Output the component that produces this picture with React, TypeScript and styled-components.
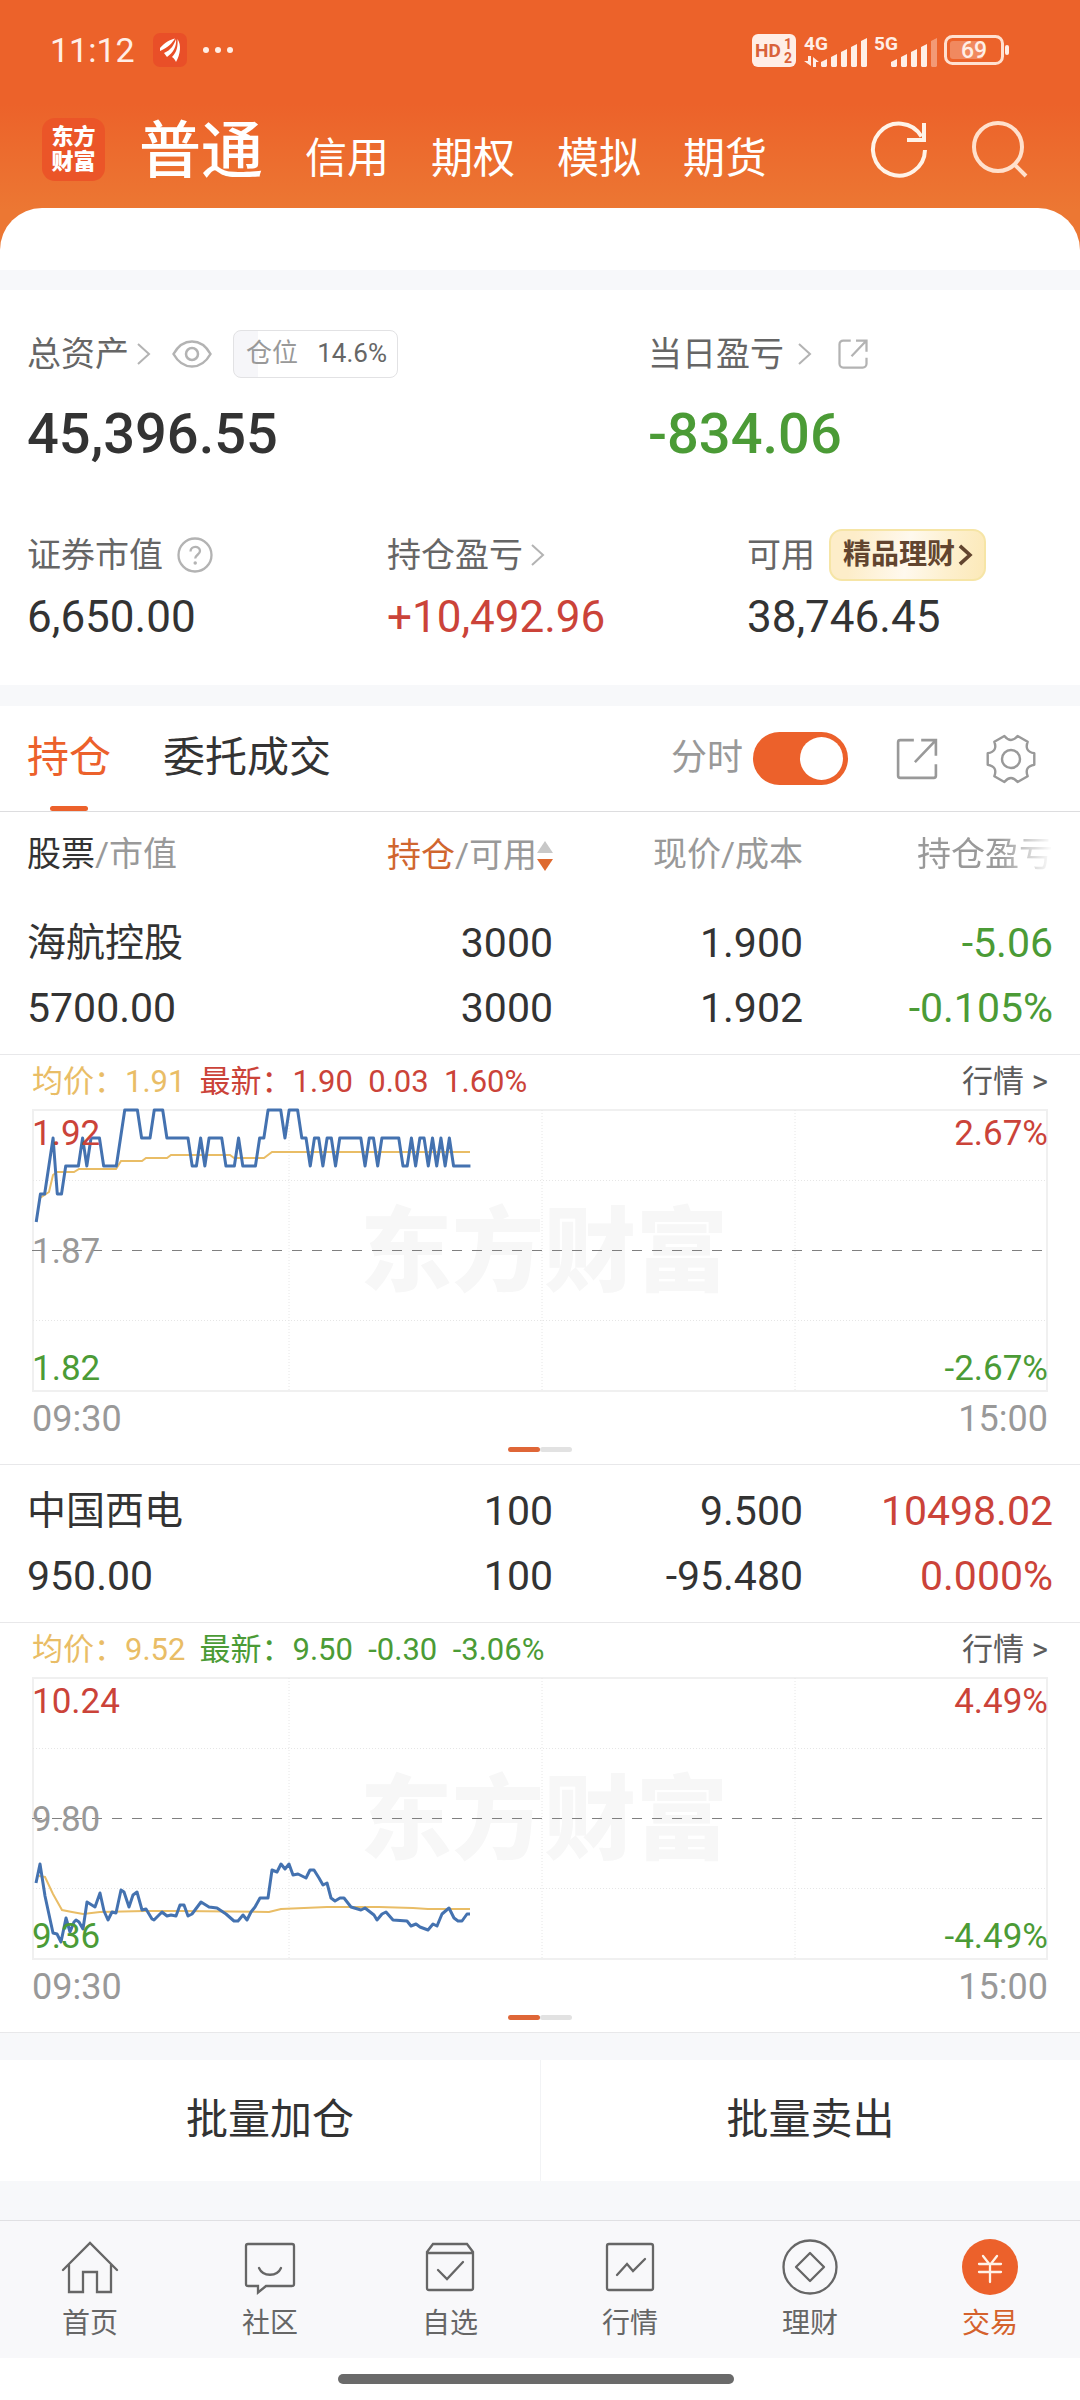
import React, { useState } from 'react';
import styled, { createGlobalStyle } from 'styled-components';

const color = {
  brand: '#ec612b',
  text: '#333333',
  sub: '#666666',
  mute: '#999999',
  line: '#e8e8ea',
  page: '#f7f8fa',
  up: '#cb4339',
  down: '#4b9b36',
  avg: '#e9bd66',
  price: '#4472b0',
};

const GlobalStyle = createGlobalStyle`
  * { box-sizing: border-box; }
  body {
    margin: 0;
    background: ${color.page};
    color: ${color.text};
    font-family: Roboto, "Noto Sans CJK SC", sans-serif;
    font-size: 34px;
    line-height: 1.2;
  }
  button {
    border: 0;
    padding: 0;
    background: none;
    color: inherit;
    font: inherit;
    cursor: pointer;
  }
  a { color: inherit; text-decoration: none; }
  svg { display: block; flex: none; overflow: visible; }
`;

type Tone = 'up' | 'down' | 'plain';
const toneColor = (t?: Tone) => (t === 'up' ? color.up : t === 'down' ? color.down : color.text);

/* ---------- header ---------- */

const Header = styled.header`
  padding-bottom: 52px;
  background: linear-gradient(#ec622a 104px, #ec7733 210px);
  color: #fff;
`;

const StatusBar = styled.div`
  display: flex;
  align-items: center;
  height: 100px;
  padding: 0 70px 0 50px;
  color: #ffeee6;
`;

const Clock = styled.time`
  margin-right: 18px;
  font-size: 34px;
`;

const StatusRight = styled.div`
  display: flex;
  align-items: center;
  gap: 8px;
  margin-left: auto;
`;

const NavBar = styled.div`
  display: flex;
  align-items: center;
  gap: 34px;
  height: 98px;
  padding: 0 52px 0 42px;
`;

const Logo = styled.div`
  display: grid;
  place-content: center;
  width: 63px;
  height: 63px;
  border-radius: 13px;
  background: #eb5528;
  font-size: 22px;
  font-weight: 900;
  line-height: 25px;
  text-align: center;
`;

const AccountTabs = styled.nav`
  display: flex;
  align-items: baseline;
  gap: 42px;
  padding-top: 12px;
  line-height: 80px;
`;

const AccountTab = styled.button<{ $active?: boolean }>`
  font-size: ${(p) => (p.$active ? 62 : 42)}px;
  font-weight: ${(p) => (p.$active ? 500 : 400)};
`;

const NavActions = styled.div`
  display: flex;
  gap: 44px;
  margin-left: auto;
`;

/* ---------- asset summary ---------- */

const Sheet = styled.div`
  height: 62px;
  margin-top: -42px;
  border-radius: 42px 42px 0 0;
  background: #fff;
`;

const Summary = styled.section`
  margin-top: 20px;
  padding: 40px 0 42px;
  background: #fff;
`;

const TotalRow = styled.div`
  display: grid;
  grid-template-columns: 23fr 17fr;
`;

const DetailRow = styled.div`
  display: grid;
  grid-template-columns: repeat(3, 1fr);
  margin-top: 63px;
`;

const Cell = styled.div`
  padding-left: 27px;
`;

const CellHead = styled.div<{ $tall?: boolean }>`
  display: flex;
  align-items: center;
  height: ${(p) => (p.$tall ? 52 : 48)}px;
  color: ${color.sub};
  white-space: nowrap;
`;

const HeadLink = styled.a<{ $wide?: boolean }>`
  display: flex;
  align-items: center;
  gap: ${(p) => (p.$wide ? 14 : 8)}px;
`;

const IconButton = styled.button<{ $gap: number }>`
  margin-left: ${(p) => p.$gap}px;
`;

const BigValue = styled.div<{ $tone?: Tone }>`
  margin-top: 24px;
  color: ${(p) => toneColor(p.$tone)};
  font-size: 56px;
  font-weight: 500;
  line-height: 64px;
`;

const Value = styled.div<{ $tone?: Tone }>`
  margin-top: 10px;
  color: ${(p) => toneColor(p.$tone)};
  font-size: 44px;
  line-height: 52px;
`;

const Ratio = styled.div`
  display: flex;
  align-items: center;
  justify-content: space-between;
  width: 165px;
  height: 48px;
  margin-left: 21px;
  padding: 0 10px 0 12px;
  border: 1px solid #e2e2e4;
  border-radius: 8px;
  background: linear-gradient(90deg, #f6f6f9 15%, #fff 15%);
  font-size: 26px;
`;

const RatioLabel = styled.span`
  color: ${color.mute};
`;

const Promo = styled.a`
  display: flex;
  align-items: center;
  gap: 4px;
  height: 52px;
  margin-left: 14px;
  padding: 0 12px;
  border: 2px solid #f6e5a6;
  border-radius: 13px;
  background: linear-gradient(100deg, #fdedc9 15%, #fff9ee 50%, #fdf0cf 75%, #fce9b8);
  color: #62452f;
  font-size: 28px;
  font-weight: 700;
`;

/* ---------- positions ---------- */

const Positions = styled.section`
  margin-top: 21px;
  background: #fff;
`;

const TabBar = styled.div`
  display: flex;
  align-items: stretch;
  height: 106px;
  padding: 0 44px 0 27px;
  border-bottom: 1px solid #dddddf;
`;

const Tab = styled.button<{ $active?: boolean }>`
  position: relative;
  margin-right: 52px;
  color: ${(p) => (p.$active ? color.brand : color.text)};
  font-size: 42px;

  &::after {
    content: '';
    display: ${(p) => (p.$active ? 'block' : 'none')};
    position: absolute;
    bottom: 0;
    left: 50%;
    width: 38px;
    height: 5px;
    margin-left: -19px;
    border-radius: 3px;
    background: ${color.brand};
  }
`;

const Tools = styled.div`
  display: flex;
  align-items: center;
  margin-left: auto;
`;

const SwitchLabel = styled.label`
  display: flex;
  align-items: center;
  gap: 10px;
  color: ${color.mute};
  font-size: 36px;
`;

const Switch = styled.input`
  appearance: none;
  display: flex;
  align-items: center;
  width: 95px;
  height: 53px;
  margin: 0;
  padding: 0 5px;
  border-radius: 27px;
  background: #d5d5d8;

  &::before {
    content: '';
    width: 43px;
    height: 43px;
    border-radius: 50%;
    background: #fff;
  }
  &:checked {
    justify-content: flex-end;
    background: ${color.brand};
  }
`;

const Table = styled.table`
  width: 100%;
  border-collapse: separate;
  border-spacing: 0;
  table-layout: fixed;
`;

const Th = styled.th`
  height: 85px;
  padding: 0;
  color: ${color.mute};
  font-weight: 400;
  text-align: right;
  white-space: nowrap;

  &:first-child { padding-left: 27px; text-align: left; }
  &:last-child { padding-right: 27px; }
`;

const SortButton = styled.button`
  display: inline-flex;
  align-items: center;
  vertical-align: middle;
`;

const Strong = styled.span<{ $brand?: boolean }>`
  color: ${(p) => (p.$brand ? '#d0662f' : color.text)};
`;

const Faded = styled.span`
  mask-image: linear-gradient(90deg, #000 60%, transparent);
`;

const Td = styled.td<{ $tone?: Tone }>`
  padding: 14px 0 13px;
  border-bottom: 1px solid ${color.line};
  color: ${(p) => toneColor(p.$tone)};
  font-size: 41px;
  line-height: 65px;
  text-align: right;

  &:first-child { padding-left: 27px; text-align: left; }
  &:last-child { padding-right: 27px; }
`;

const StockName = styled.div`
  font-size: 39px;
`;

/* ---------- intraday chart ---------- */

const ChartCell = styled.td`
  padding: 0 32px;
  border-bottom: 1px solid ${color.line};
`;

const Legend = styled.div`
  display: flex;
  align-items: center;
  height: 54px;
  gap: 14px;
  font-size: 31px;
  white-space: pre;
`;

const LegendText = styled.span<{ $color: string }>`
  color: ${(p) => p.$color};
`;

const QuoteLink = styled.a`
  margin-left: auto;
  color: #5c5c5c;
`;

const Plot = styled.div`
  position: relative;
  height: 283px;
  font-size: 35px;
  line-height: 40px;
`;

const PlotSvg = styled.svg`
  position: absolute;
  inset: 0;
  width: 100%;
  height: 100%;
`;

const Watermark = styled.div`
  display: grid;
  place-items: center;
  height: 100%;
  padding: 4px 0 0 8px;
  color: #f7f7f7;
  font-size: 92px;
  font-weight: 900;
`;

const Axis = styled.div<{ $side: 'left' | 'right' }>`
  position: absolute;
  top: 5px;
  bottom: 3px;
  ${(p) => p.$side}: 0;
  display: flex;
  flex-direction: column;
  justify-content: space-between;
  text-align: ${(p) => p.$side};
`;

const AxisLabel = styled.span<{ $color: string }>`
  color: ${(p) => p.$color};
`;

const Times = styled.div`
  display: flex;
  justify-content: space-between;
  color: ${color.mute};
  font-size: 36px;
  line-height: 54px;
`;

const Pager = styled.div`
  display: flex;
  justify-content: center;
  padding: 1px 0 12px;
`;

const PagerDot = styled.span<{ $on?: boolean }>`
  width: 32px;
  height: 5px;
  border-radius: 3px;
  background: ${(p) => (p.$on ? '#df6637' : '#e2e2e2')};
`;

/* ---------- bottom ---------- */

const Batch = styled.div`
  display: grid;
  grid-template-columns: 1fr 1fr;
  margin: 27px 0 39px;
  background: #fff;
`;

const BatchButton = styled.button`
  height: 121px;
  font-size: 42px;

  & + & { border-left: 1px solid #f2f3f5; }
`;

const BottomNav = styled.nav`
  display: grid;
  grid-template-columns: repeat(6, 1fr);
  padding: 18px 0 16px;
  border-top: 1px solid #e0e0e3;
  background: #f8f8fa;
`;

const NavItem = styled.a<{ $active?: boolean }>`
  display: flex;
  flex-direction: column;
  align-items: center;
  gap: 11px;
  color: ${(p) => (p.$active ? '#d5622c' : color.sub)};
  font-size: 28px;
  line-height: 36px;
`;

const HomeArea = styled.div`
  display: flex;
  justify-content: center;
  padding: 16px 8px 16px 0;
  background: #fff;
`;

const HomeBar = styled.div`
  width: 37%;
  height: 10px;
  border-radius: 5px;
  background: #6a6a6a;
`;

/* ---------- icons ---------- */

const Chevron = ({ stroke = '#b3b3b3', w = 2, size = 22 }) => (
  <svg width={(size * 14) / 22} height={size} viewBox="0 0 14 22" fill="none" stroke={stroke} strokeWidth={w}>
    <path d="M1 1l11 10L1 21" />
  </svg>
);

const Eye = () => (
  <svg width="40" height="28" viewBox="0 0 40 28" fill="none" stroke="#b3b3b3" strokeWidth="2.5">
    <path d="M1.5 14C6 6 12 1.5 20 1.5S34 6 38.500 14C34 22 28 26.500 20 26.500S6 22 1.500 14z" />
    <circle cx="20" cy="14" r="6" />
  </svg>
);

const Share = ({ size = 30, stroke = '#b3b3b3', r = 5 }) => (
  <svg width={size} height={size} viewBox="0 0 40 40" fill="none" stroke={stroke} strokeWidth={size > 35 ? 2.5 : 3}>
    <path d={`M17 2H${2 + r}a${r} ${r} 0 0 0-${r} ${r}V${38 - r}a${r} ${r} 0 0 0 ${r} ${r}H${38 - r}a${r} ${r} 0 0 0 ${r}-${r}V25`} />
    <path d="M24 2h14v15M38 2L18 23" />
  </svg>
);

const Question = () => (
  <svg width="36" height="36" viewBox="0 0 36 36" fill="none" stroke="#b3b3b3" strokeWidth="2.300">
    <circle cx="18" cy="18" r="16.500" />
    <path d="M13.500 14.500c0-6 9.500-6 9.500-.500 0 3.500-4.800 4-4.800 7.500" />
    <circle cx="18.200" cy="26" r="1" fill="#b3b3b3" strokeWidth="1.500" />
  </svg>
);

const polar = (r: number, deg: number) => {
  const a = (deg * Math.PI) / 180;
  return `${(25 + r * Math.cos(a)).toFixed(2)} ${(25 + r * Math.sin(a)).toFixed(2)}`;
};
const gearPath =
  [0, 60, 120, 180, 240, 300]
    .map((a, i) => `${i ? 'L' : 'M'}${polar(24, a - 14)}L${polar(24, a + 14)}Q${polar(15, a + 30)} ${polar(24, a + 46)}`)
    .join('') + 'z';

const Gear = () => (
  <svg width="50" height="50" viewBox="0 0 50 50" fill="none" stroke="#999" strokeWidth="2.400" strokeLinejoin="round">
    <path d={gearPath} />
    <circle cx="25" cy="25" r="9" />
  </svg>
);

const Refresh = () => (
  <svg width="56" height="56" viewBox="0 0 56 56" fill="none" stroke="#fff3e8" strokeWidth="4">
    <path d="M53 29A26 26 0 1 1 49.500 15.500" />
    <path d="M52 2v17H35" />
  </svg>
);

const Search = () => (
  <svg width="56" height="56" viewBox="0 0 56 56" fill="none" stroke="#ffe0cc" strokeWidth="4">
    <circle cx="26" cy="26" r="24" />
    <path d="M42 43l12 12" />
  </svg>
);

const SortArrows = () => (
  <svg width="16" height="32" viewBox="0 0 16 32">
    <path d="M8 1l8 12H0z" fill="#c8c8c8" />
    <path d="M8 31l8-12H0z" fill="#de6a30" />
  </svg>
);

const AppBadge = () => (
  <svg width="34" height="34" viewBox="0 0 34 34">
    <rect width="34" height="34" rx="7" fill="#e94f28" />
    <path
      fill="#fff"
      d="M7 15C12 9 17 7 22 5.500 19 10 16 14 7 18zM11 20c7-3 10-8 12-14 1 7-3 14-9 18zM19 24c5-5 6-11 5.500-18 4 6 3 15-1.500 23-1-2-2-4-4-5z"
    />
  </svg>
);

const Dots = styled.span`
  display: flex;
  gap: 6px;
  margin-left: 16px;

  i {
    width: 6px;
    height: 6px;
    border-radius: 50%;
    background: #ffeee6;
  }
`;

const HdBadge = () => (
  <svg width="44" height="33" viewBox="0 0 44 33" fontFamily="Roboto, sans-serif" fontWeight="700" fill="#d9623a">
    <rect width="44" height="33" rx="6" fill="#ffeee6" />
    <text x="3" y="23" fontSize="19">HD</text>
    <text x="32" y="15" fontSize="14">1</text>
    <text x="32" y="29" fontSize="14">2</text>
  </svg>
);

const Signal = ({ label, arrows, weak }: { label: string; arrows?: boolean; weak?: boolean }) => (
  <svg width="62" height="36" viewBox="0 -4 62 36" fontFamily="Roboto, sans-serif" fontWeight="700" fill="#ffeee6">
    <text x="0" y="14" fontSize="19">{label}</text>
    {arrows && <path d="M4 20h3v10L0 25h4zM9 31V21l6 5h-3v5z" />}
    {[8, 13, 18, 23, 29].map((h, i) => (
      <path
        key={h}
        opacity={weak && i === 4 ? 0.4 : 1}
        d={`M${17 + i * 10} ${31 - h + 3}l6-3v${h - 1}l-1 1h-4l-1-1z`}
      />
    ))}
  </svg>
);

const Battery = () => (
  <svg width="66" height="30" viewBox="0 0 66 30" fontFamily="Roboto, sans-serif">
    <rect x="1.500" y="1.500" width="57" height="27" rx="7" fill="none" stroke="#ffe0d0" strokeWidth="3" />
    <rect x="6" y="6" width="33" height="18" rx="3" fill="#fff" opacity=".25" />
    <rect x="61" y="10" width="4" height="10" rx="2" fill="#ffeee6" />
    <text x="30" y="23" fontSize="23" fontWeight="500" textAnchor="middle" fill="#ffeee6">69</text>
  </svg>
);

const NavIcon = ({ children }: { children: React.ReactNode }) => (
  <svg width="56" height="56" viewBox="0 0 56 56" fill="none" stroke="#666" strokeWidth="2.300" strokeLinecap="round">
    {children}
  </svg>
);

const navItems = [
  {
    label: '首页',
    icon: <path d="M1 31L28 4l27 27M7 26v27h14V33h14v20h14V26" />,
  },
  {
    label: '社区',
    icon: (
      <>
        <path d="M6 5h44a2 2 0 0 1 2 2v38a2 2 0 0 1-2 2H24l-8 6.500V47H6a2 2 0 0 1-2-2V7a2 2 0 0 1 2-2z" />
        <path d="M17 29c4 9 18 9 22 0" />
      </>
    ),
  },
  {
    label: '自选',
    icon: (
      <>
        <path d="M5 13l6-8h34l6 8v36a2 2 0 0 1-2 2H7a2 2 0 0 1-2-2zM5 14h46" />
        <path d="M16 31l9 9 16-17" />
      </>
    ),
  },
  {
    label: '行情',
    icon: (
      <>
        <rect x="5" y="5" width="46" height="46" rx="2" />
        <path d="M15 36l10-11 6 7 12-12" />
      </>
    ),
  },
  {
    label: '理财',
    icon: (
      <>
        <circle cx="28" cy="28" r="26.500" />
        <path d="M28 14l14 14-14 14-14-14z" strokeLinejoin="round" />
      </>
    ),
  },
  {
    label: '交易',
    active: true,
    icon: (
      <>
        <circle cx="28" cy="28" r="28" fill={color.brand} stroke="none" />
        <path d="M21 17l7 9 7-9M28 26v17M17 25h22M17 33h22" stroke="#fff3e8" />
      </>
    ),
  },
];

/* ---------- data ---------- */

type Point = [number, number];

const PLOT_W = 1016;
const PLOT_H = 283;

// One digit per trading minute: the last decimal of a price between 1.88 and 1.92.
const HAINAN_TICKS = (
  '8 9 9 0 1 9 9 0 0 0 0 1 0 1 1 1 0 0 0 0 1 2 2 2 2 1 1 1 2 2 2 1 1 1 1 1 1 0 0 1 0 1 1 1 1 0 0 0 1 0 0 0 0 1 1 ' +
  '2 2 2 2 1 2 2 2 1 1 0 1 1 0 1 1 0 1 1 1 1 1 1 0 1 1 0 1 1 1 1 1 0 0 1 0 1 1 0 1 0 1 0 1 0 0 0 0 0'
).split(' ');

const hainanPrice: Point[] = HAINAN_TICKS.map((t, i) => {
  const cents = Number(t) < 5 ? 190 + Number(t) : 180 + Number(t);
  return [((i + 1) * PLOT_W) / 241, 1 + (192 - cents) * 28];
});

const hainanAvg: Point[] = [
  [8, 89], [17, 83], [21, 66], [25, 63], [42, 63], [47, 60], [84, 60], [89, 52], [110, 52], [114, 49],
  [135, 49], [139, 46], [198, 46], [202, 49], [232, 49], [240, 43], [438, 43],
];

const xidianPrice: Point[] = [
  [4, 206], [8, 187], [13, 219], [21, 256], [25, 257], [29, 265], [34, 241], [38, 255], [42, 245], [44, 243],
  [47, 245], [51, 252], [55, 225], [63, 230], [68, 216], [72, 234], [76, 243], [80, 235], [84, 236], [89, 213],
  [92, 215], [97, 230], [101, 218], [105, 215], [110, 233], [114, 232], [120, 242], [122, 243], [130, 235],
  [135, 239], [139, 238], [144, 239], [148, 228], [152, 228], [156, 239], [160, 237], [169, 225], [177, 230],
  [185, 231], [194, 237], [202, 244], [206, 244], [211, 238], [215, 243], [219, 235], [223, 230], [228, 221],
  [236, 221], [240, 193], [245, 195], [249, 187], [253, 192], [257, 187], [261, 198], [266, 197], [274, 201],
  [278, 193], [282, 193], [287, 201], [291, 208], [295, 206], [299, 221], [303, 224], [308, 221], [312, 221],
  [319, 230], [329, 233], [333, 231], [342, 238], [345, 243], [350, 237], [354, 235], [361, 243], [375, 244],
  [379, 249], [384, 247], [388, 250], [396, 253], [401, 247], [405, 249], [410, 237], [417, 231], [422, 241],
  [426, 244], [430, 244], [435, 237], [438, 237],
];

const xidianAvg: Point[] = [
  [7, 199], [13, 200], [21, 217], [30, 233], [40, 235], [51, 237], [68, 235], [113, 234], [147, 234],
  [237, 235], [249, 232], [295, 230], [347, 230], [381, 231], [396, 232], [438, 232],
];

interface Holding {
  name: string;
  value: string;
  amount: string;
  usable: string;
  price: string;
  cost: string;
  profit: string;
  rate: string;
  tone: Tone;
  avg: string;
  last: string[];
  lastTone: Tone;
  high: string;
  mid: string;
  low: string;
  range: string;
  prices: Point[];
  avgs: Point[];
}

const holdings: Holding[] = [
  {
    name: '海航控股', value: '5700.00', amount: '3000', usable: '3000', price: '1.900', cost: '1.902',
    profit: '-5.06', rate: '-0.105%', tone: 'down', avg: '1.91', last: ['1.90', '0.03', '1.60%'], lastTone: 'up',
    high: '1.92', mid: '1.87', low: '1.82', range: '2.67%', prices: hainanPrice, avgs: hainanAvg,
  },
  {
    name: '中国西电', value: '950.00', amount: '100', usable: '100', price: '9.500', cost: '-95.480',
    profit: '10498.02', rate: '0.000%', tone: 'up', avg: '9.52', last: ['9.50', '-0.30', '-3.06%'], lastTone: 'down',
    high: '10.24', mid: '9.80', low: '9.36', range: '4.49%', prices: xidianPrice, avgs: xidianAvg,
  },
];

const toPoints = (pts: Point[]) => pts.map((p) => p.join(',')).join(' ');

function Chart({ h }: { h: Holding }) {
  return (
    <ChartCell colSpan={4}>
      <Legend>
        <LegendText $color={color.avg}>均价：{h.avg}</LegendText>
        <LegendText $color={toneColor(h.lastTone)}>最新：{h.last.join('  ')}</LegendText>
        <QuoteLink href="#quote">行情 &gt;</QuoteLink>
      </Legend>
      <Plot>
        <Watermark aria-hidden>东方财富</Watermark>
        <PlotSvg viewBox={`0 0 ${PLOT_W} ${PLOT_H}`} preserveAspectRatio="none" fill="none">
          <rect x="1" y="1" width={PLOT_W - 2} height={PLOT_H - 2} stroke="#f0f0f0" strokeWidth="2" />
          <path
            d="M257 1V282M510 1V282M763 1V282M1 71.500H1015M1 211.500H1015"
            stroke="#e6e6e6"
            strokeDasharray="1 2"
            vectorEffect="non-scaling-stroke"
          />
          <path d="M0 141.500H1016" stroke="#808080" strokeDasharray="10 10" vectorEffect="non-scaling-stroke" />
          <polyline points={toPoints(h.avgs)} stroke={color.avg} strokeWidth="2" vectorEffect="non-scaling-stroke" />
          <polyline
            points={toPoints(h.prices)}
            stroke={color.price}
            strokeWidth="3"
            strokeLinejoin="round"
            vectorEffect="non-scaling-stroke"
          />
        </PlotSvg>
        <Axis $side="left">
          <AxisLabel $color={color.up}>{h.high}</AxisLabel>
          <AxisLabel $color={color.mute}>{h.mid}</AxisLabel>
          <AxisLabel $color={color.down}>{h.low}</AxisLabel>
        </Axis>
        <Axis $side="right">
          <AxisLabel $color={color.up}>{h.range}</AxisLabel>
          <AxisLabel $color={color.down}>-{h.range}</AxisLabel>
        </Axis>
      </Plot>
      <Times>
        <span>09:30</span>
        <span>15:00</span>
      </Times>
      <Pager>
        <PagerDot $on />
        <PagerDot />
      </Pager>
    </ChartCell>
  );
}

export default function App() {
  const [showChart, setShowChart] = useState(true);

  return (
    <>
      <GlobalStyle />
      <Header>
        <StatusBar>
          <Clock>11:12</Clock>
          <AppBadge />
          <Dots><i /><i /><i /></Dots>
          <StatusRight>
            <HdBadge />
            <Signal label="4G" arrows />
            <Signal label="5G" weak />
            <Battery />
          </StatusRight>
        </StatusBar>
        <NavBar>
          <Logo>东方<br />财富</Logo>
          <AccountTabs>
            <AccountTab $active>普通</AccountTab>
            {['信用', '期权', '模拟', '期货'].map((t) => <AccountTab key={t}>{t}</AccountTab>)}
          </AccountTabs>
          <NavActions>
            <button aria-label="刷新"><Refresh /></button>
            <button aria-label="搜索"><Search /></button>
          </NavActions>
        </NavBar>
      </Header>
      <Sheet />

      <Summary>
        <TotalRow>
          <Cell>
            <CellHead>
              <HeadLink href="#assets">总资产<Chevron /></HeadLink>
              <IconButton $gap={21} aria-label="隐藏金额"><Eye /></IconButton>
              <Ratio><RatioLabel>仓位</RatioLabel><span>14.6%</span></Ratio>
            </CellHead>
            <BigValue>45,396.55</BigValue>
          </Cell>
          <Cell>
            <CellHead>
              <HeadLink href="#today" $wide>当日盈亏<Chevron /></HeadLink>
              <IconButton $gap={26} aria-label="分享"><Share /></IconButton>
            </CellHead>
            <BigValue $tone="down">-834.06</BigValue>
          </Cell>
        </TotalRow>
        <DetailRow>
          <Cell>
            <CellHead $tall>
              证券市值
              <IconButton $gap={14} aria-label="说明"><Question /></IconButton>
            </CellHead>
            <Value>6,650.00</Value>
          </Cell>
          <Cell>
            <CellHead $tall><HeadLink href="#profit">持仓盈亏<Chevron /></HeadLink></CellHead>
            <Value $tone="up">+10,492.96</Value>
          </Cell>
          <Cell>
            <CellHead $tall>
              可用
              <Promo href="#wealth">精品理财<Chevron stroke="#62452f" w={4} size={20} /></Promo>
            </CellHead>
            <Value>38,746.45</Value>
          </Cell>
        </DetailRow>
      </Summary>

      <Positions>
        <TabBar>
          <Tab $active>持仓</Tab>
          <Tab>委托成交</Tab>
          <Tools>
            <SwitchLabel>
              分时
              <Switch type="checkbox" checked={showChart} onChange={(e) => setShowChart(e.target.checked)} />
            </SwitchLabel>
            <IconButton $gap={48} aria-label="分享持仓"><Share size={42} stroke="#999" r={2} /></IconButton>
            <IconButton $gap={48} aria-label="设置"><Gear /></IconButton>
          </Tools>
        </TabBar>
        <Table>
          <colgroup>
            <col />
            <col width="250" />
            <col width="250" />
            <col width="277" />
          </colgroup>
          <thead>
            <tr>
              <Th><Strong>股票</Strong>/市值</Th>
              <Th><SortButton><Strong $brand>持仓</Strong>/可用<SortArrows /></SortButton></Th>
              <Th>现价/成本</Th>
              <Th><Faded>持仓盈亏</Faded></Th>
            </tr>
          </thead>
          <tbody>
            {holdings.map((h) => (
              <React.Fragment key={h.name}>
                <tr>
                  <Td><StockName>{h.name}</StockName>{h.value}</Td>
                  <Td>{h.amount}<br />{h.usable}</Td>
                  <Td>{h.price}<br />{h.cost}</Td>
                  <Td $tone={h.tone}>{h.profit}<br />{h.rate}</Td>
                </tr>
                {showChart && <tr><Chart h={h} /></tr>}
              </React.Fragment>
            ))}
          </tbody>
        </Table>
      </Positions>

      <Batch>
        <BatchButton>批量加仓</BatchButton>
        <BatchButton>批量卖出</BatchButton>
      </Batch>

      <BottomNav>
        {navItems.map((n) => (
          <NavItem key={n.label} href={`#${n.label}`} $active={n.active}>
            <NavIcon>{n.icon}</NavIcon>
            {n.label}
          </NavItem>
        ))}
      </BottomNav>
      <HomeArea><HomeBar /></HomeArea>
    </>
  );
}
